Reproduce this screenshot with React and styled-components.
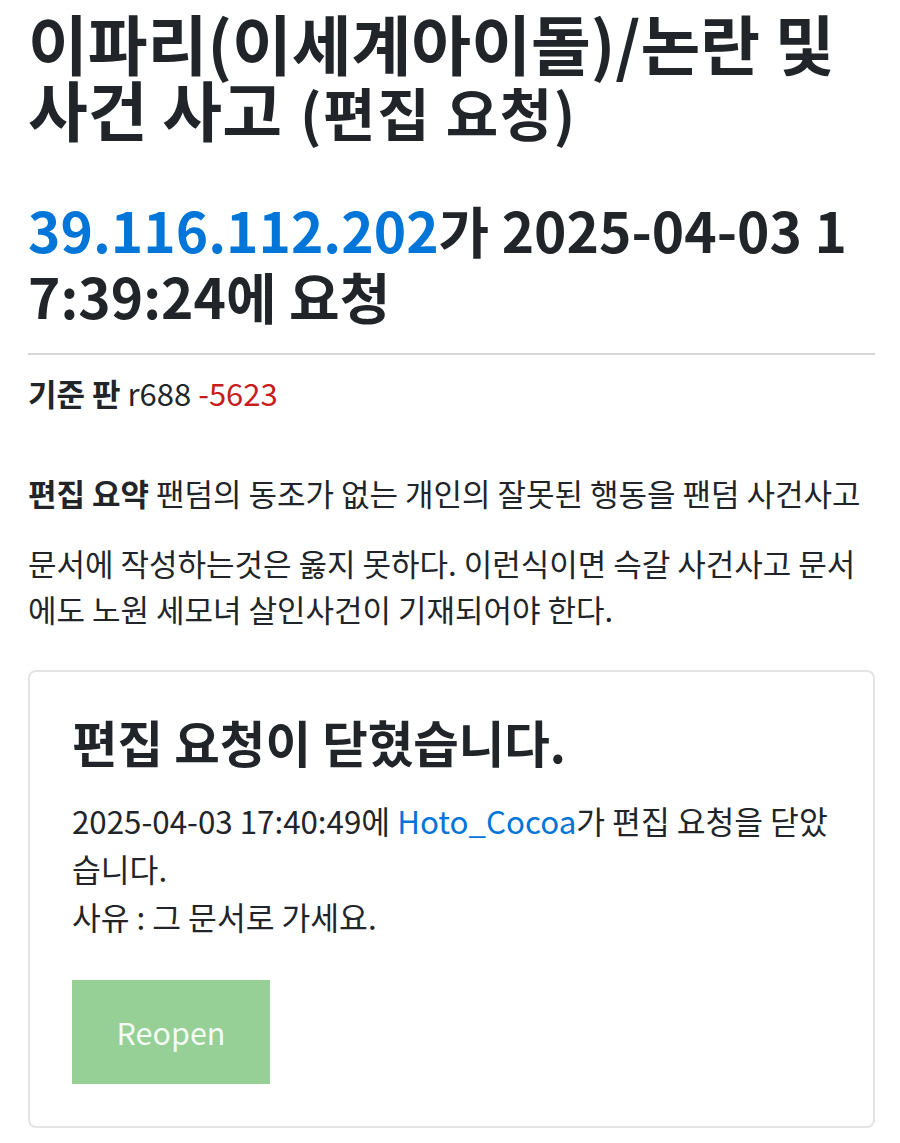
import React from "react";
import styled, { createGlobalStyle } from "styled-components";

const Global = createGlobalStyle`
  html, body { margin: 0; padding: 0; background: #fff; }
  body {
    font-family: "Noto Sans CJK KR", "Noto Sans", sans-serif;
    color: #212529;
    word-break: break-all;
  }
`;

const Page = styled.div`
  padding: 0 25px 0 28px;
`;

const Title = styled.h1`
  margin: 0;
  padding-top: 9px;
  font-size: 65px;
  font-weight: 700;
  line-height: 66px;
`;

const TitleSmall = styled.small`
  font-size: 57px;
  font-weight: 700;
  line-height: 1;
  letter-spacing: 1.6px;
  margin-left: 18px;
`;

const SubTitle = styled.h2`
  margin: 55px 0 0;
  font-size: 55px;
  font-weight: 700;
  line-height: 66px;
  padding-bottom: 25px;
  border-bottom: 2px solid #d6d6d6;
`;

const Link = styled.a`
  color: #0275d8;
  text-decoration: none;
`;

const Meta = styled.p`
  margin: 15px 0 0;
  font-size: 31px;
  line-height: 46px;
`;

const Label = styled.b`
  font-weight: 700;
`;

const LeadLabel = styled(Label)`
  display: inline-block;
  padding-bottom: 24px;
`;

const Minus = styled.span`
  color: #c81c1c;
`;

const Summary = styled.p`
  margin: 54px 0 0;
  font-size: 31px;
  line-height: 46px;
`;

const Card = styled.section`
  margin-top: 38px;
  border: 2px solid #e4e4e4;
  border-radius: 8px;
  padding: 40px 44px 42px 42px;
`;

const CardTitle = styled.h3`
  margin: 0;
  font-size: 49.5px;
  font-weight: 700;
  line-height: 60px;
`;

const CardText = styled.p`
  margin: 25px 0 0;
  font-size: 31.3px;
  line-height: 48px;
`;

const Button = styled.button`
  display: block;
  margin-top: 39px;
  width: 198px;
  height: 104px;
  border: none;
  background: #96d096;
  color: #f4fbf4;
  font-family: "Noto Sans CJK KR", "Noto Sans", sans-serif;
  font-size: 30.5px;
  cursor: default;
`;

export default function App() {
  return (
    <>
      <Global />
      <Page>
        <Title>
          이파리(이세계아이돌)/논란 및 사건 사고
          <TitleSmall>(편집 요청)</TitleSmall>
        </Title>
        <SubTitle>
          <Link>39.116.112.202</Link>가 2025-04-03 17:39:24에 요청
        </SubTitle>
        <Meta>
          <Label>기준 판</Label> r688 <Minus>-5623</Minus>
        </Meta>
        <Summary>
          <LeadLabel>편집 요약</LeadLabel> 팬덤의 동조가 없는 개인의 잘못된 행동을 팬덤 사건사고 문서에 작성하는것은 옳지 못하다. 이런식이면 슥갈 사건사고 문서에도 노원 세모녀 살인사건이 기재되어야 한다.
        </Summary>
        <Card>
          <CardTitle>편집 요청이 닫혔습니다.</CardTitle>
          <CardText>
            2025-04-03 17:40:49에 <Link>Hoto_Cocoa</Link>가 편집 요청을 닫았습니다.
            <br />
            사유 : 그 문서로 가세요.
          </CardText>
          <Button>Reopen</Button>
        </Card>
      </Page>
    </>
  );
}
